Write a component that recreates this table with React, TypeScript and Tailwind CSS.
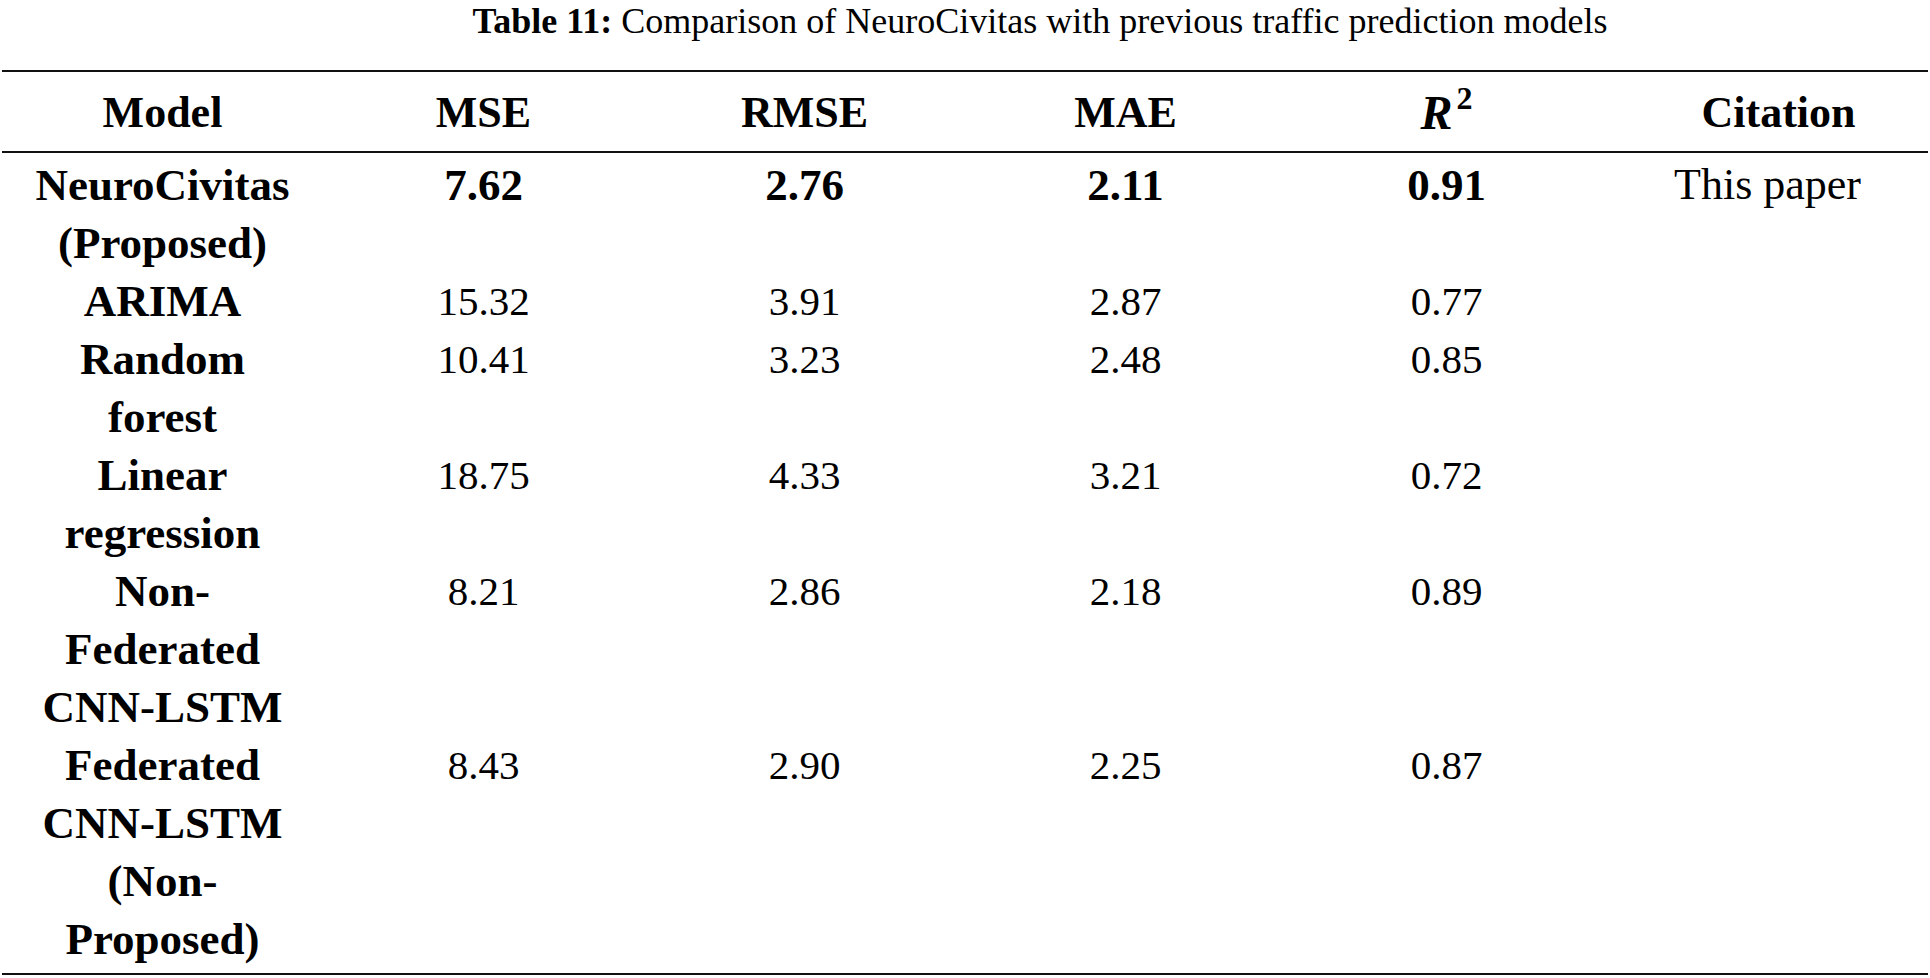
const COLUMNS = ["Model", "MSE", "RMSE", "MAE", "R2", "Citation"];

type Row = {
  model: string[];
  mse: string;
  rmse: string;
  mae: string;
  r2: string;
  citation?: string;
  best?: boolean;
};

const ROWS: Row[] = [
  { model: ["NeuroCivitas", "(Proposed)"], mse: "7.62", rmse: "2.76", mae: "2.11", r2: "0.91", citation: "This paper", best: true },
  { model: ["ARIMA"], mse: "15.32", rmse: "3.91", mae: "2.87", r2: "0.77" },
  { model: ["Random", "forest"], mse: "10.41", rmse: "3.23", mae: "2.48", r2: "0.85" },
  { model: ["Linear", "regression"], mse: "18.75", rmse: "4.33", mae: "3.21", r2: "0.72" },
  { model: ["Non-", "Federated", "CNN-LSTM"], mse: "8.21", rmse: "2.86", mae: "2.18", r2: "0.89" },
  { model: ["Federated", "CNN-LSTM", "(Non-", "Proposed)"], mse: "8.43", rmse: "2.90", mae: "2.25", r2: "0.87" },
];

function HeaderCell({ name }: { name: string }) {
  if (name === "R2") {
    return (
      <th className="pt-[11px] pb-[9px] text-center text-[48px] font-bold leading-[59px]">
        <span className="italic">R</span>
        <sup className="relative -top-[3px] ml-[4px] align-super text-[32px] leading-none">2</sup>
      </th>
    );
  }
  return (
    <th
      className={`pt-[11px] pb-[9px] text-center text-[44px] font-bold leading-[59px] ${
        name === "Citation" ? "pl-[22px]" : ""
      }`}
    >
      {name}
    </th>
  );
}

export default function App() {
  return (
    <div className="h-[978px] w-[1930px] overflow-hidden bg-white font-['Liberation_Serif',serif] text-black">
      <p className="h-[70px] pl-[150px] text-center text-[36px] leading-[42px]">
        <span className="font-bold">Table 11:</span> Comparison of NeuroCivitas with previous traffic prediction models
      </p>

      <div className="px-[2px]">
        <table className="w-full table-fixed border-collapse border-y-2 border-[#111]">
          <thead>
            <tr className="border-b-2 border-[#111]">
              {COLUMNS.map((c) => (
                <HeaderCell key={c} name={c} />
              ))}
            </tr>
          </thead>
          <tbody>
            {ROWS.map((r, i) => {
              const num = r.best
                ? "text-[45px] font-bold"
                : "text-[41px] font-normal";
              const pad =
                i === 0 ? "pt-[3px]" : i === ROWS.length - 1 ? "pb-[5px]" : "";
              return (
                <tr key={r.model.join(" ")} className="align-top leading-[58px]">
                  <td className={`p-0 ${pad} text-center text-[45px] font-bold`}>
                    {r.model.map((line) => (
                      <div key={line}>{line}</div>
                    ))}
                  </td>
                  <td className={`p-0 ${pad} text-center ${num}`}>{r.mse}</td>
                  <td className={`p-0 ${pad} text-center ${num}`}>{r.rmse}</td>
                  <td className={`p-0 ${pad} text-center ${num}`}>{r.mae}</td>
                  <td className={`p-0 ${pad} text-center ${num}`}>{r.r2}</td>
                  <td className={`p-0 ${pad} text-center text-[44px]`}>{r.citation ?? ""}</td>
                </tr>
              );
            })}
          </tbody>
        </table>
      </div>
    </div>
  );
}
